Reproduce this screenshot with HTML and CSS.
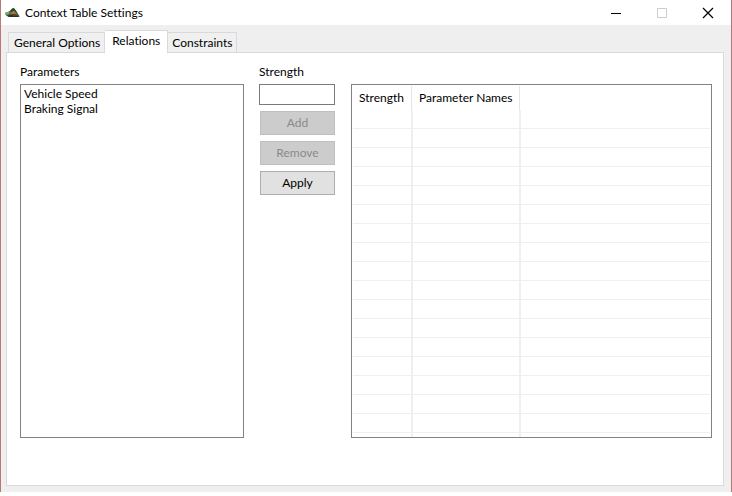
FILE: index.html
```html
<!DOCTYPE html>
<html lang="en">
<head>
<meta charset="utf-8">
<title>Context Table Settings</title>
<link rel="stylesheet" href="styles.css">
</head>
<body>
<main class="window">
  <header class="titlebar">
    <svg class="app-icon" width="16" height="12" viewBox="0 0 16 12" aria-hidden="true">
      <path d="M0 6 4 4.500 7 1.500 9 1l3 4 2.500 4.500L12 10H4L1 8.500z" fill="#466b3c"/>
      <path d="M6 3l2.500-2L11 4l1 2-3-2-3 2z" fill="#204a1f"/>
      <path d="M0 6l4-1.500.500 2L2 8z" fill="#7fa574"/>
      <path d="M5.500 6l3-2.500L11 6l-1 1.500H5z" fill="#a9744f"/>
      <path d="M5 7h6l2 1.500-4 .500H6z" fill="#6b3a2a"/>
      <path d="M2 8.500l4-.500 4 1 4-.500.500 1L12 10H4z" fill="#1d3a1c"/>
    </svg>
    <h1 class="title">Context Table Settings</h1>
    <div class="window-controls">
      <button class="control" type="button" aria-label="Minimize">
        <svg width="12" height="12" viewBox="0 0 12 12"><path d="M1 6.500h10" stroke="#000"/></svg>
      </button>
      <button class="control" type="button" aria-label="Maximize" disabled>
        <svg width="12" height="12" viewBox="0 0 12 12"><path d="M1.500 1.500h9v9h-9z" fill="none" stroke="#ccc"/></svg>
      </button>
      <button class="control" type="button" aria-label="Close">
        <svg width="12" height="12" viewBox="0 0 12 12"><path d="M1 1l10 10M11 1L1 11" stroke="#000" stroke-width="1.200"/></svg>
      </button>
    </div>
  </header>
  <div class="tabs" role="tablist">
    <button class="tab" type="button" role="tab" aria-selected="false">General Options</button>
    <button class="tab tab-active" type="button" role="tab" aria-selected="true">Relations</button>
    <button class="tab" type="button" role="tab" aria-selected="false">Constraints</button>
  </div>
  <section class="panel" role="tabpanel">
    <div class="column">
      <label class="label" for="parameters">Parameters</label>
      <select class="list" id="parameters" multiple>
        <option>Vehicle Speed</option>
        <option>Braking Signal</option>
      </select>
    </div>
    <div class="column column-form">
      <label class="label" for="strength">Strength</label>
      <input class="field" id="strength" type="text">
      <div class="actions">
        <button class="action" type="button" disabled>Add</button>
        <button class="action" type="button" disabled>Remove</button>
        <button class="action" type="button">Apply</button>
      </div>
    </div>
    <div class="column column-table">
      <div class="table-box">
        <table class="relations">
          <colgroup><col class="col-strength"><col class="col-names"><col></colgroup>
          <thead><tr><th>Strength</th><th>Parameter Names</th><th></th></tr></thead>
          <tbody>
            <tr><td></td><td></td><td></td></tr>
            <tr><td></td><td></td><td></td></tr>
            <tr><td></td><td></td><td></td></tr>
            <tr><td></td><td></td><td></td></tr>
            <tr><td></td><td></td><td></td></tr>
            <tr><td></td><td></td><td></td></tr>
            <tr><td></td><td></td><td></td></tr>
            <tr><td></td><td></td><td></td></tr>
            <tr><td></td><td></td><td></td></tr>
            <tr><td></td><td></td><td></td></tr>
            <tr><td></td><td></td><td></td></tr>
            <tr><td></td><td></td><td></td></tr>
            <tr><td></td><td></td><td></td></tr>
            <tr><td></td><td></td><td></td></tr>
            <tr><td></td><td></td><td></td></tr>
            <tr><td></td><td></td><td></td></tr>
            <tr><td></td><td></td><td></td></tr>
            <tr><td></td><td></td><td></td></tr>
          </tbody>
        </table>
      </div>
    </div>
  </section>
</main>
</body>
</html>
```
FILE: styles.css
```css
* {
  box-sizing: border-box;
}

body {
  margin: 0;
  padding-bottom: 4px;
  height: 100vh;
  background: #fff;
  color: #000;
  font: 12px/16px Lato, "Open Sans", sans-serif;
  font-variant-ligatures: none;
}

button,
input,
select {
  margin: 0;
  border-radius: 0;
  color: inherit;
  font: inherit;
  font-variant-ligatures: none;
}

.window {
  display: flex;
  flex-direction: column;
  height: 100%;
  border: solid #b87878;
  border-width: 0 1px;
  background: #efefef;
}

.titlebar {
  display: flex;
  align-items: center;
  height: 25px;
  padding-left: 4px;
  background: #fff;
}

.title {
  margin: 0 auto 0 4px;
  font-size: 12px;
  font-weight: 400;
}

.window-controls {
  display: flex;
}

.control {
  display: flex;
  align-items: center;
  justify-content: center;
  width: 46px;
  height: 24px;
  padding: 0;
  border: 0;
  background: none;
}

.tabs {
  display: flex;
  align-items: flex-end;
  height: 28px;
  margin: 0 7px;
}

.tab {
  height: 21px;
  padding: 0 4px;
  border: 1px solid #d9d9d9;
  border-left-width: 0;
  background: #f0f0f0;
}

.tab:first-child {
  padding-left: 5px;
  border-left-width: 1px;
}

.tab-active {
  z-index: 1;
  height: 23px;
  padding: 0 7px 2px;
  border-bottom: 0;
  background: #fff;
}

.panel {
  display: grid;
  flex: 1;
  grid-template-columns: minmax(0, 224fr) 77px minmax(0, 361fr);
  gap: 15px;
  min-height: 0;
  margin: -1px 7px 6px 5px;
  padding: 11px 11px 47px 13px;
  border: 1px solid #d9d9d9;
  background: #fff;
}

.column {
  display: flex;
  flex-direction: column;
  min-height: 0;
}

.column-form {
  padding-right: 1px;
}

.column-table {
  padding-top: 20px;
}

.label {
  height: 20px;
}

.list {
  flex: 1;
  min-height: 0;
  padding: 1px 2px;
  border: 1px solid #828282;
  background: #fff;
  overflow: hidden;
}

.list option {
  height: 15px;
  min-height: 0;
  padding: 0 1px;
}

.field {
  width: 100%;
  height: 21px;
  padding: 0 4px;
  border: 1px solid #7a7a7a;
  background: #fff;
}

.actions {
  display: grid;
  gap: 6px;
  padding: 6px 0 0 1px;
}

.action {
  height: 24px;
  padding: 0;
  border: 1px solid #adadad;
  background: #e1e1e1;
}

.action:disabled {
  border-color: #bfbfbf;
  background: #ccc;
  color: #8a8a8a;
}

.table-box {
  flex: 1;
  min-height: 0;
  padding: 1px;
  border: 1px solid #828282;
  overflow: hidden;
}

.relations {
  width: 100%;
  border-spacing: 0;
  table-layout: fixed;
}

.col-strength {
  width: 60px;
}

.col-names {
  width: 108px;
}

.relations th {
  height: 24px;
  padding: 0 0 0 6px;
  background: linear-gradient(#e5e5e5, #e5e5e5) right 1px top / 1px 100% no-repeat;
  font-weight: 400;
  text-align: left;
  white-space: nowrap;
}

.relations td {
  height: 19px;
  padding: 0;
  border: solid #edeff0;
  border-width: 0 2px 1px 0;
}

.relations th:last-child {
  background: none;
}

.relations td:last-child {
  border-right-width: 0;
}
```
